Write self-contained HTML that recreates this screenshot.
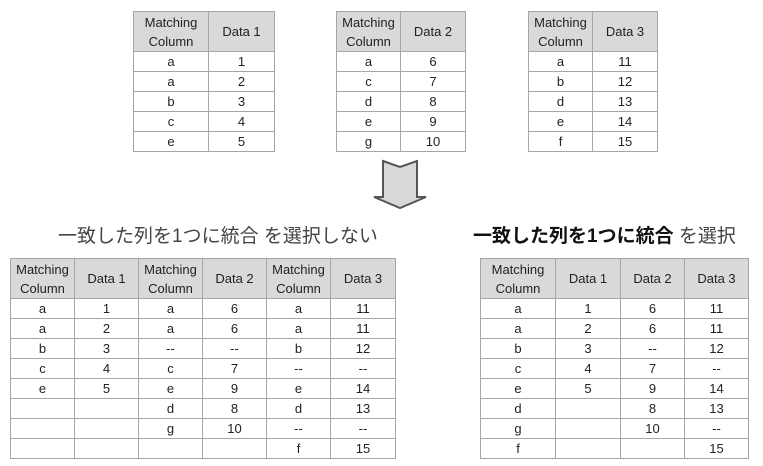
<!DOCTYPE html>
<html><head><meta charset="utf-8"><style>
body{margin:0;width:763px;height:466px;background:#fff;position:relative;overflow:hidden;font-family:"Liberation Sans","Noto Sans CJK JP",sans-serif;color:#222}
table{position:absolute;border-collapse:collapse;table-layout:fixed;font-size:13px}
td,th{border:1px solid #a6a6a6;text-align:center;padding:0;height:19px;line-height:15px;font-weight:normal}
th{background:#d9d9d9;height:39px;line-height:19px}
.t{position:absolute;white-space:nowrap;font-size:19px;line-height:22px}
</style></head><body>
<table style="left:133px;top:11px;width:141px"><col style="width:75px"><col style="width:66px">
<tr><th>Matching<br>Column</th><th>Data 1</th></tr>
<tr><td>a</td><td>1</td></tr><tr><td>a</td><td>2</td></tr><tr><td>b</td><td>3</td></tr><tr><td>c</td><td>4</td></tr><tr><td>e</td><td>5</td></tr></table>
<table style="left:336px;top:11px;width:129px"><col style="width:64px"><col style="width:65px">
<tr><th>Matching<br>Column</th><th>Data 2</th></tr>
<tr><td>a</td><td>6</td></tr><tr><td>c</td><td>7</td></tr><tr><td>d</td><td>8</td></tr><tr><td>e</td><td>9</td></tr><tr><td>g</td><td>10</td></tr></table>
<table style="left:528px;top:11px;width:129px"><col style="width:64px"><col style="width:65px">
<tr><th>Matching<br>Column</th><th>Data 3</th></tr>
<tr><td>a</td><td>11</td></tr><tr><td>b</td><td>12</td></tr><tr><td>d</td><td>13</td></tr><tr><td>e</td><td>14</td></tr><tr><td>f</td><td>15</td></tr></table>
<svg style="position:absolute;left:370px;top:155px" width="62" height="60"><path d="M13 6 L30 12 L47 6 L47 42 L56 42 L30 53 L4 42 L13 42 Z" fill="#d9d9d9" stroke="#555" stroke-width="2" stroke-linejoin="miter"/></svg>
<div class="t" style="left:58px;top:226px;color:#444">一致した列を1つに統合 を選択しない</div>
<div class="t" style="left:473px;top:226px;color:#444"><b style="color:#111">一致した列を1つに統合</b> を選択</div>
<table style="left:10px;top:258px;width:385px"><col style="width:64px"><col style="width:64px"><col style="width:64px"><col style="width:64px"><col style="width:64px"><col style="width:65px">
<tr><th>Matching<br>Column</th><th>Data 1</th><th>Matching<br>Column</th><th>Data 2</th><th>Matching<br>Column</th><th>Data 3</th></tr>
<tr><td>a</td><td>1</td><td>a</td><td>6</td><td>a</td><td>11</td></tr>
<tr><td>a</td><td>2</td><td>a</td><td>6</td><td>a</td><td>11</td></tr>
<tr><td>b</td><td>3</td><td>--</td><td>--</td><td>b</td><td>12</td></tr>
<tr><td>c</td><td>4</td><td>c</td><td>7</td><td>--</td><td>--</td></tr>
<tr><td>e</td><td>5</td><td>e</td><td>9</td><td>e</td><td>14</td></tr>
<tr><td></td><td></td><td>d</td><td>8</td><td>d</td><td>13</td></tr>
<tr><td></td><td></td><td>g</td><td>10</td><td>--</td><td>--</td></tr>
<tr><td></td><td></td><td></td><td></td><td>f</td><td>15</td></tr></table>
<table style="left:480px;top:258px;width:268px"><col style="width:75px"><col style="width:65px"><col style="width:64px"><col style="width:64px">
<tr><th>Matching<br>Column</th><th>Data 1</th><th>Data 2</th><th>Data 3</th></tr>
<tr><td>a</td><td>1</td><td>6</td><td>11</td></tr>
<tr><td>a</td><td>2</td><td>6</td><td>11</td></tr>
<tr><td>b</td><td>3</td><td>--</td><td>12</td></tr>
<tr><td>c</td><td>4</td><td>7</td><td>--</td></tr>
<tr><td>e</td><td>5</td><td>9</td><td>14</td></tr>
<tr><td>d</td><td></td><td>8</td><td>13</td></tr>
<tr><td>g</td><td></td><td>10</td><td>--</td></tr>
<tr><td>f</td><td></td><td></td><td>15</td></tr></table>
</body></html>
